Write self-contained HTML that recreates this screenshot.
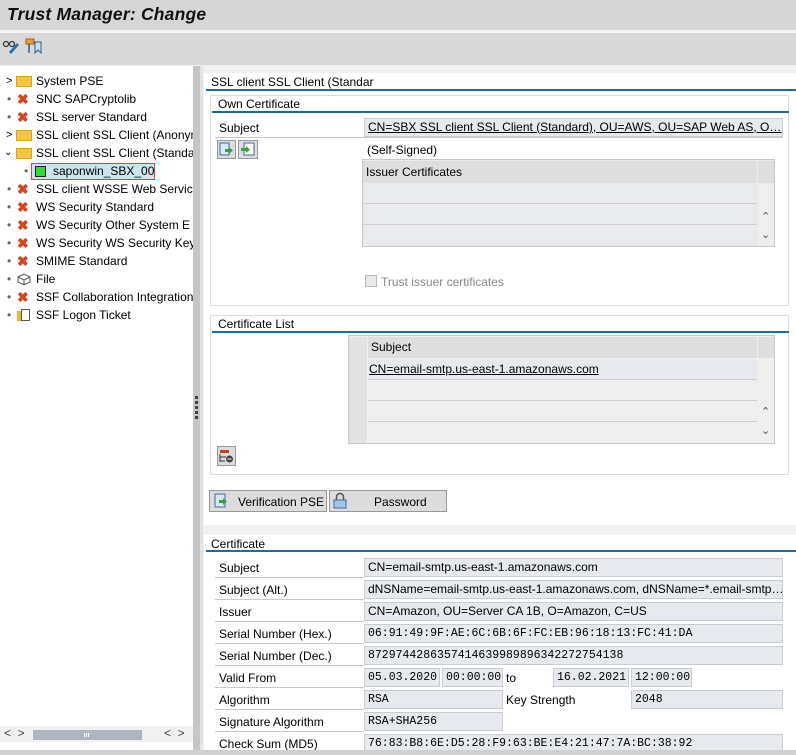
<!DOCTYPE html>
<html><head><meta charset="utf-8"><style>
*{margin:0;padding:0;box-sizing:border-box}
body{width:796px;height:755px;overflow:hidden;background:#f0f0f0;font-family:"Liberation Sans",sans-serif;font-size:12px;color:#000;position:relative}
.a{position:absolute;white-space:nowrap}
.t{font-size:12px;line-height:14px}
.fld{position:absolute;background:#e6e9ee;border:1px solid #c9ccd1;height:19px;line-height:17px;padding-left:3px;font-size:12px;white-space:nowrap;overflow:hidden}
.mono{font-family:"Liberation Mono",monospace;font-size:11.5px}
.ul{position:absolute;height:1px;background:#c8c8c8}
.blue{position:absolute;height:2px;background:#1b6bab}
.x{color:#d9451b;font-weight:bold;font-size:14px}
.tr{position:absolute;left:0;width:193px;overflow:hidden;height:18px;line-height:18px;white-space:nowrap;font-size:12px;color:#000}
</style></head><body>
<div class="a" style="left:0;top:0;width:796px;height:30px;background:#d6d6d6"></div>
<div class="a" style="left:7px;top:4px;font-size:17.5px;font-weight:bold;font-style:italic;color:#111;letter-spacing:0.2px">Trust Manager: Change</div>
<div class="a" style="left:0;top:30px;width:796px;height:3px;background:#f4f4f4"></div>
<div class="a" style="left:0;top:33px;width:796px;height:32px;background:#d8d8d8"></div>
<svg class="a" style="left:2px;top:38px" width="18" height="16"><circle cx="4" cy="6" r="2.5" fill="none" stroke="#333" stroke-width="1.2"/><circle cx="10" cy="6" r="2.5" fill="none" stroke="#333" stroke-width="1.2"/><path d="M7 14 L15 5 L17 7 L9 16 Z" fill="#2d6fb5"/></svg>
<svg class="a" style="left:25px;top:38px" width="18" height="16"><rect x="1" y="1" width="8" height="5" fill="#f0a030" stroke="#b06010"/><path d="M8 4 H16 V15 L13 12 L10 15 V4" fill="#cfe0ef" stroke="#2d5f95"/><path d="M4 6 V15" stroke="#2d5f95" stroke-width="1.5"/></svg>
<div class="a" style="left:0;top:66px;width:193px;height:684px;background:#fff"></div>
<div class="a" style="left:193px;top:66px;width:7px;height:684px;background:#c6c6c6"></div>
<div class="a" style="left:200px;top:66px;width:3px;height:684px;background:#e4e4e4"></div>
<div class="a" style="left:195px;top:396px;width:3px;height:24px;background:repeating-linear-gradient(#444 0 3px,transparent 3px 5px)"></div>
<div class="a" style="left:0;top:750px;width:796px;height:5px;background:#d0d0d0"></div>

<div class="tr" style="top:72px"><span class="a" style="left:6px;top:0;font-size:11px">&gt;</span><span class="a" style="left:16px;top:4px;width:16px;height:11px;background:#f6c342;border:1px solid #d9a520"></span><span class="a" style="left:36px">System PSE</span></div>
<div class="tr" style="top:90px"><span class="a" style="left:7px;color:#666">•</span><span class="a x" style="left:17px">✖</span><span class="a" style="left:36px">SNC SAPCryptolib</span></div>
<div class="tr" style="top:108px"><span class="a" style="left:7px;color:#666">•</span><span class="a x" style="left:17px">✖</span><span class="a" style="left:36px">SSL server Standard</span></div>
<div class="tr" style="top:126px"><span class="a" style="left:6px;font-size:11px">&gt;</span><span class="a" style="left:16px;top:4px;width:16px;height:11px;background:#f6c342;border:1px solid #d9a520"></span><span class="a" style="left:36px">SSL client SSL Client (Anonym</span></div>
<div class="tr" style="top:144px"><span class="a" style="left:4px;font-size:10px">&#8964;</span><span class="a" style="left:16px;top:4px;width:16px;height:11px;background:#f6c342;border:1px solid #d9a520"></span><span class="a" style="left:36px">SSL client SSL Client (Standa</span></div>
<div class="tr" style="top:162px"><span class="a" style="left:24px;color:#666">•</span><span class="a" style="left:31px;top:1px;width:124px;height:17px;background:#cfe3ee;border:1px solid #e04040"></span><span class="a" style="left:35px;top:4px;width:11px;height:11px;background:#2ee02e;border:1px solid #222"></span><span class="a" style="left:53px">saponwin_SBX_00</span></div>
<div class="tr" style="top:180px"><span class="a" style="left:7px;color:#666">•</span><span class="a x" style="left:17px">✖</span><span class="a" style="left:36px">SSL client WSSE Web Servic</span></div>
<div class="tr" style="top:198px"><span class="a" style="left:7px;color:#666">•</span><span class="a x" style="left:17px">✖</span><span class="a" style="left:36px">WS Security Standard</span></div>
<div class="tr" style="top:216px"><span class="a" style="left:7px;color:#666">•</span><span class="a x" style="left:17px">✖</span><span class="a" style="left:36px">WS Security Other System E</span></div>
<div class="tr" style="top:234px"><span class="a" style="left:7px;color:#666">•</span><span class="a x" style="left:17px">✖</span><span class="a" style="left:36px">WS Security WS Security Key</span></div>
<div class="tr" style="top:252px"><span class="a" style="left:7px;color:#666">•</span><span class="a x" style="left:17px">✖</span><span class="a" style="left:36px">SMIME Standard</span></div>
<div class="tr" style="top:270px"><span class="a" style="left:7px;color:#666">•</span><svg class="a" style="left:17px;top:3px" width="14" height="13"><path d="M1 4 L7 1 L13 4 L13 9 L7 12 L1 9 Z M1 4 L7 7 L13 4 M7 7 V12" fill="none" stroke="#555"/></svg><span class="a" style="left:36px">File</span></div>
<div class="tr" style="top:288px"><span class="a" style="left:7px;color:#666">•</span><span class="a x" style="left:17px">✖</span><span class="a" style="left:36px">SSF Collaboration Integration</span></div>
<div class="tr" style="top:306px"><span class="a" style="left:7px;color:#666">•</span><span class="a" style="left:17px;top:5px;width:9px;height:10px;background:#f6b030"></span><span class="a" style="left:21px;top:3px;width:9px;height:12px;border:1px solid #555;background:#fff"></span><span class="a" style="left:36px">SSF Logon Ticket</span></div>
<div class="a" style="left:0;top:726px;width:193px;height:16px;background:#f0f0f0"></div>
<div class="a" style="left:4px;top:726px;font-size:12px;color:#444">&lt;&nbsp;&nbsp;&gt;</div>
<div class="a" style="left:33px;top:730px;width:109px;height:10px;background:#adb6c0"></div>
<div class="a" style="left:84px;top:733px;width:6px;height:4px;background:repeating-linear-gradient(90deg,#fff 0 1px,transparent 1px 2px)"></div>
<div class="a" style="left:164px;top:726px;font-size:12px;color:#444">&lt;&nbsp;&nbsp;&gt;</div>

<div class="a" style="left:203px;top:66px;width:593px;height:684px;background:#f2f2f2"></div>
<div class="a" style="left:204px;top:73px;width:592px;height:452px;background:#fff"></div>
<div class="a t" style="left:211px;top:75px">SSL client SSL Client (Standar</div>
<div class="blue" style="left:206px;top:89px;width:590px"></div>

<div class="a" style="left:210px;top:95px;width:579px;height:211px;border:1px solid #ddd;background:#fff"></div>
<div class="a t" style="left:218px;top:97px">Own Certificate</div>
<div class="blue" style="left:212px;top:111px;width:577px"></div>
<div class="a t" style="left:219px;top:121px">Subject</div>
<div class="fld" style="left:364px;top:118px;width:419px;text-decoration:underline">CN=SBX SSL client SSL Client (Standard), OU=AWS, OU=SAP Web AS, O…</div>
<div class="ul" style="left:215px;top:137px;width:568px"></div>
<div class="a" style="left:217px;top:140px;width:19px;height:19px;background:#ddd;border:1px solid #999"></div>
<div class="a" style="left:238px;top:140px;width:20px;height:19px;background:#ddd;border:1px solid #999"></div>
<svg class="a" style="left:219px;top:142px" width="38" height="15"><rect x="1" y="1" width="9" height="12" fill="#dbe8f5" stroke="#3a6aa0"/><path d="M6 7 H10 V5 L14 8.5 L10 12 V10 H6 Z" fill="#3aa040"/><rect x="25" y="1" width="10" height="12" fill="#fff" stroke="#3a6aa0"/><path d="M22 6 H27 V4 L31 7.5 L27 11 V9 H22 Z" fill="#3aa040"/></svg>
<div class="a t" style="left:367px;top:143px">(Self-Signed)</div>
<div class="a" style="left:362px;top:159px;width:413px;height:88px;border:1px solid #c8c8c8;background:#e8eaed"></div>
<div class="a" style="left:363px;top:161px;width:394px;height:22px;background:#dedede;line-height:22px;padding-left:3px">Issuer Certificates</div>
<div class="a" style="left:758px;top:161px;width:16px;height:22px;background:#dedede"></div>
<div class="a" style="left:758px;top:184px;width:16px;height:62px;background:#eee"></div>
<div class="ul" style="left:363px;top:203px;width:394px;background:#d0d0d0"></div>
<div class="ul" style="left:363px;top:224px;width:394px;background:#d0d0d0"></div>
<div class="a" style="left:761px;top:210px;font-size:11px;color:#555">&#8963;</div>
<div class="a" style="left:761px;top:228px;font-size:11px;color:#555">&#8964;</div>
<div class="a" style="left:365px;top:275px;width:12px;height:12px;border:1px solid #bbb;background:#e8e8e8"></div>
<div class="a t" style="left:381px;top:275px;color:#888">Trust issuer certificates</div>

<div class="a" style="left:210px;top:315px;width:579px;height:160px;border:1px solid #ddd;background:#fff"></div>
<div class="a t" style="left:218px;top:317px">Certificate List</div>
<div class="blue" style="left:212px;top:331px;width:577px"></div>
<div class="a" style="left:348px;top:335px;width:427px;height:109px;border:1px solid #c8c8c8;background:#efefef"></div>
<div class="a" style="left:349px;top:337px;width:18px;height:106px;background:#e2e2e2"></div>
<div class="a" style="left:368px;top:337px;width:389px;height:21px;background:#dedede;line-height:21px;padding-left:3px">Subject</div>
<div class="a" style="left:758px;top:337px;width:16px;height:21px;background:#dedede"></div>
<div class="a" style="left:368px;top:359px;width:389px;height:20px;background:#e6e9ee;line-height:20px;padding-left:1px;text-decoration:underline">CN=email-smtp.us-east-1.amazonaws.com</div>
<div class="ul" style="left:368px;top:379px;width:389px;background:#d0d0d0"></div>
<div class="ul" style="left:368px;top:400px;width:389px;background:#d0d0d0"></div>
<div class="ul" style="left:368px;top:421px;width:389px;background:#d0d0d0"></div>
<div class="a" style="left:761px;top:405px;font-size:11px;color:#555">&#8963;</div>
<div class="a" style="left:761px;top:424px;font-size:11px;color:#555">&#8964;</div>
<div class="a" style="left:217px;top:446px;width:19px;height:20px;background:#ddd;border:1px solid #999"></div>
<svg class="a" style="left:219px;top:449px" width="15" height="14"><rect x="1" y="1" width="9" height="3" fill="#d04020"/><path d="M1 5 V13 M1 8 H7 M1 12 H6" stroke="#333"/><circle cx="10.5" cy="10" r="3.5" fill="#444"/><path d="M8.5 10 H12.5" stroke="#fff"/></svg>

<div class="a" style="left:209px;top:490px;width:118px;height:22px;background:#dcdcdc;border:1px solid #999"></div>
<svg class="a" style="left:213px;top:493px" width="16" height="16"><rect x="2" y="1" width="10" height="13" fill="#dbe8f5" stroke="#3a6aa0"/><path d="M6 7 H10 V5 L14 8.5 L10 12 V10 H6 Z" fill="#3aa040"/></svg>
<div class="a t" style="left:238px;top:495px">Verification PSE</div>
<div class="a" style="left:329px;top:490px;width:118px;height:22px;background:#dcdcdc;border:1px solid #999"></div>
<svg class="a" style="left:333px;top:492px" width="14" height="17"><path d="M3.5 8 V5 A3.5 3.5 0 0 1 10.5 5 V8" fill="none" stroke="#555" stroke-width="1.5"/><rect x="1" y="8" width="12" height="8" fill="#a6c4e4" stroke="#3a6aa0"/></svg>
<div class="a t" style="left:374px;top:495px">Password</div>

<div class="a" style="left:204px;top:535px;width:592px;height:215px;background:#fff"></div>
<div class="a t" style="left:211px;top:537px">Certificate</div>
<div class="blue" style="left:206px;top:550px;width:590px"></div>

<div class="a t" style="left:219px;top:561px">Subject</div>
<div class="fld" style="left:364px;top:558px;width:419px">CN=email-smtp.us-east-1.amazonaws.com</div>
<div class="ul" style="left:215px;top:577px;width:149px"></div>
<div class="a t" style="left:219px;top:583px">Subject (Alt.)</div>
<div class="fld" style="left:364px;top:580px;width:419px">dNSName=email-smtp.us-east-1.amazonaws.com, dNSName=*.email-smtp…</div>
<div class="ul" style="left:215px;top:599px;width:149px"></div>
<div class="a t" style="left:219px;top:605px">Issuer</div>
<div class="fld" style="left:364px;top:602px;width:419px">CN=Amazon, OU=Server CA 1B, O=Amazon, C=US</div>
<div class="ul" style="left:215px;top:621px;width:149px"></div>
<div class="a t" style="left:219px;top:627px">Serial Number (Hex.)</div>
<div class="fld mono" style="left:364px;top:624px;width:419px">06:91:49:9F:AE:6C:6B:6F:FC:EB:96:18:13:FC:41:DA</div>
<div class="ul" style="left:215px;top:643px;width:149px"></div>
<div class="a t" style="left:219px;top:649px">Serial Number (Dec.)</div>
<div class="fld mono" style="left:364px;top:646px;width:419px">8729744286357414639989896342272754138</div>
<div class="ul" style="left:215px;top:665px;width:149px"></div>
<div class="a t" style="left:219px;top:671px">Valid From</div>
<div class="fld mono" style="left:364px;top:668px;width:76px">05.03.2020</div>
<div class="fld mono" style="left:442px;top:668px;width:61px">00:00:00</div>
<div class="a t" style="left:506px;top:671px">to</div>
<div class="fld mono" style="left:553px;top:668px;width:76px">16.02.2021</div>
<div class="fld mono" style="left:631px;top:668px;width:61px">12:00:00</div>
<div class="ul" style="left:215px;top:687px;width:149px"></div>
<div class="a t" style="left:219px;top:693px">Algorithm</div>
<div class="fld mono" style="left:364px;top:690px;width:139px">RSA</div>
<div class="a t" style="left:506px;top:693px">Key Strength</div>
<div class="fld mono" style="left:631px;top:690px;width:152px">2048</div>
<div class="ul" style="left:215px;top:709px;width:149px"></div>
<div class="a t" style="left:219px;top:715px">Signature Algorithm</div>
<div class="fld mono" style="left:364px;top:712px;width:139px">RSA+SHA256</div>
<div class="ul" style="left:215px;top:731px;width:149px"></div>
<div class="a t" style="left:219px;top:737px">Check Sum (MD5)</div>
<div class="fld mono" style="left:364px;top:734px;width:419px">76:83:B8:6E:D5:28:F9:63:BE:E4:21:47:7A:BC:38:92</div>
<div class="a" style="left:203px;top:750px;width:593px;height:5px;background:#d0d0d0"></div>
</body></html>
